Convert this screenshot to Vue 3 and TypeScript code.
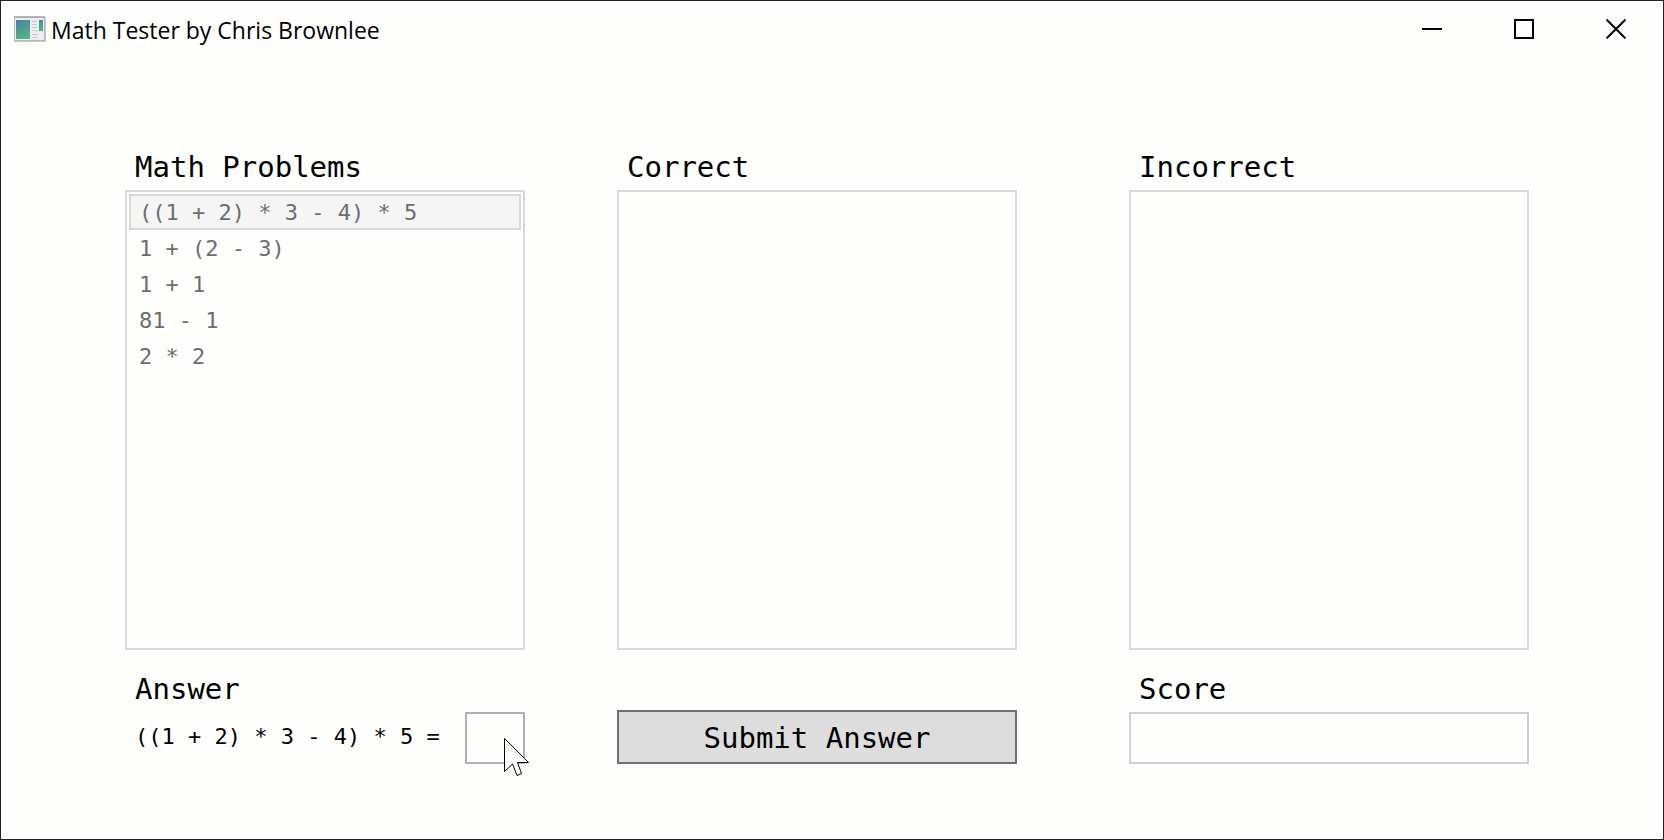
<script setup lang="ts">
import { ref } from 'vue'

const problems: string[] = ['((1 + 2) * 3 - 4) * 5', '1 + (2 - 3)', '1 + 1', '81 - 1', '2 * 2']
const selected = ref(0)
const answer = ref('')
const score = ref('')
</script>

<template>
  <div class="window">
    <header class="titlebar">
      <svg class="app-icon" width="32" height="26" viewBox="0 0 32 26" aria-hidden="true">
        <defs>
          <linearGradient id="pane" x1="0" y1="0" x2="0.4" y2="1">
            <stop offset="0" stop-color="#4481a6" />
            <stop offset="1" stop-color="#55b280" />
          </linearGradient>
        </defs>
        <rect x="0.5" y="0.5" width="30" height="24" fill="#eeeef2" stroke="#b4b5bd" />
        <path d="M1 1.5h30" stroke="#a9abb5" />
        <path d="M0 25.5h32M31.5 1v25" stroke="#c9c9cf" />
        <rect x="2" y="4" width="14" height="19" fill="url(#pane)" />
        <path d="M18 5.5h5M18 8.5h5M18 11.5h5M18 14.5h5M18 18.5h6M18 21.5h5" stroke="#c6c6ca" />
        <rect x="25" y="4" width="4" height="11" fill="url(#pane)" />
      </svg>
      <h1 class="title">Math Tester by Chris Brownlee</h1>
      <div class="caption-buttons">
        <button type="button" aria-label="Minimize">
          <svg width="20" height="20" viewBox="0 0 20 20"><path d="M0 10h20" /></svg>
        </button>
        <button type="button" aria-label="Maximize">
          <svg width="20" height="20" viewBox="0 0 20 20"><path d="M1 1h18v18H1z" /></svg>
        </button>
        <button type="button" aria-label="Close">
          <svg width="20" height="20" viewBox="0 0 20 20"><path d="M0.5 0.5l19 19M19.5 0.5L0.5 19.5" /></svg>
        </button>
      </div>
    </header>

    <main class="board">
      <section class="column">
        <h2 id="problems-label" class="label">Math Problems</h2>
        <ul class="list" aria-labelledby="problems-label">
          <li v-for="(problem, i) in problems" :key="problem">
            <button
              type="button"
              class="item"
              :class="{ selected: i === selected }"
              @click="selected = i"
            >{{ problem }}</button>
          </li>
        </ul>
        <div class="footer">
          <label class="label" for="answer">Answer</label>
          <div class="answer-row">
            <span class="expression">{{ problems[selected] }} =</span>
            <div class="answer-field">
              <input id="answer" v-model="answer" class="field answer" type="text" />
              <svg class="cursor" width="27" height="40" viewBox="0 0 27 40" aria-hidden="true">
                <path d="M0.5 0.5V33.5L8.5 26L13 37.5L17.5 35.5L13.5 24.5H24.5Z" />
              </svg>
            </div>
          </div>
        </div>
      </section>

      <section class="column">
        <h2 id="correct-label" class="label">Correct</h2>
        <ul class="list" aria-labelledby="correct-label"></ul>
        <div class="footer">
          <button type="button" class="submit">Submit Answer</button>
        </div>
      </section>

      <section class="column">
        <h2 id="incorrect-label" class="label">Incorrect</h2>
        <ul class="list" aria-labelledby="incorrect-label"></ul>
        <div class="footer">
          <label class="label" for="score">Score</label>
          <input id="score" v-model="score" class="field score" type="text" readonly />
        </div>
      </section>
    </main>
  </div>
</template>

<style>
body {
  margin: 0;
  background: #fefefd;
}
</style>

<style scoped>
* {
  box-sizing: border-box;
}

.window {
  display: flex;
  flex-direction: column;
  min-height: 100vh;
  border: 1px solid #242124;
  background: #fefefd;
  color: #000;
  font-family: 'DejaVu Sans Mono', monospace;
}

.titlebar {
  display: flex;
  align-items: center;
  height: 56px;
  padding: 0 1px 0 13px;
}

.app-icon {
  flex: none;
}

.title {
  flex: 1;
  margin: 0;
  padding: 2px 0 0 5px;
  font: 400 23px/32px 'Open Sans', 'Noto Sans', sans-serif;
}

.caption-buttons {
  display: flex;
}

.caption-buttons button {
  display: grid;
  place-items: center;
  width: 92px;
  height: 56px;
  padding: 0;
  border: 0;
  background: none;
}

.caption-buttons svg {
  fill: none;
  stroke: #000;
  stroke-width: 2;
}

.board {
  flex: 1;
  display: flex;
  padding: 87px 134px 75px 124px;
}

.column {
  flex: 1;
  display: flex;
  flex-direction: column;
  min-width: 0;
}

.column:nth-child(2) {
  margin: 0 112px 0 92px;
}

.label {
  display: block;
  margin: 0;
  padding-left: 10px;
  font-size: 29px;
  font-weight: 400;
  line-height: 46px;
}

.list {
  flex: 1;
  margin: 0;
  padding: 2px;
  border: 2px solid #d9d9dc;
  list-style: none;
}

.item {
  display: block;
  width: 100%;
  padding: 2px 8px 0;
  border: 2px solid transparent;
  background: none;
  color: #6d6d6d;
  font: inherit;
  font-size: 22px;
  line-height: 30px;
  text-align: left;
}

.item.selected {
  border-color: #d9d9d9;
  background: #f5f5f6;
}

.footer {
  display: flex;
  flex-direction: column;
  justify-content: flex-end;
  min-height: 114px;
}

.answer-row {
  display: flex;
  justify-content: space-between;
}

.expression {
  padding-left: 10px;
  font-size: 22px;
  line-height: 50px;
  white-space: nowrap;
}

.answer-field {
  position: relative;
}

.field {
  display: block;
  height: 52px;
  padding: 0 8px;
  border: 2px solid #cfd0d4;
  border-radius: 0;
  background: transparent;
  font: inherit;
  font-size: 29px;
  outline: 0;
}

.answer {
  width: 60px;
  border-color: #abadb8;
}

.score {
  width: 100%;
}

.cursor {
  position: absolute;
  top: 26px;
  left: 39px;
  fill: #fefefd;
  stroke: #000;
  pointer-events: none;
}

.submit {
  height: 54px;
  padding: 2px 0 0;
  border: 2px solid #707070;
  border-radius: 0;
  background: #ddd;
  color: #000;
  font: inherit;
  font-size: 29px;
}
</style>
